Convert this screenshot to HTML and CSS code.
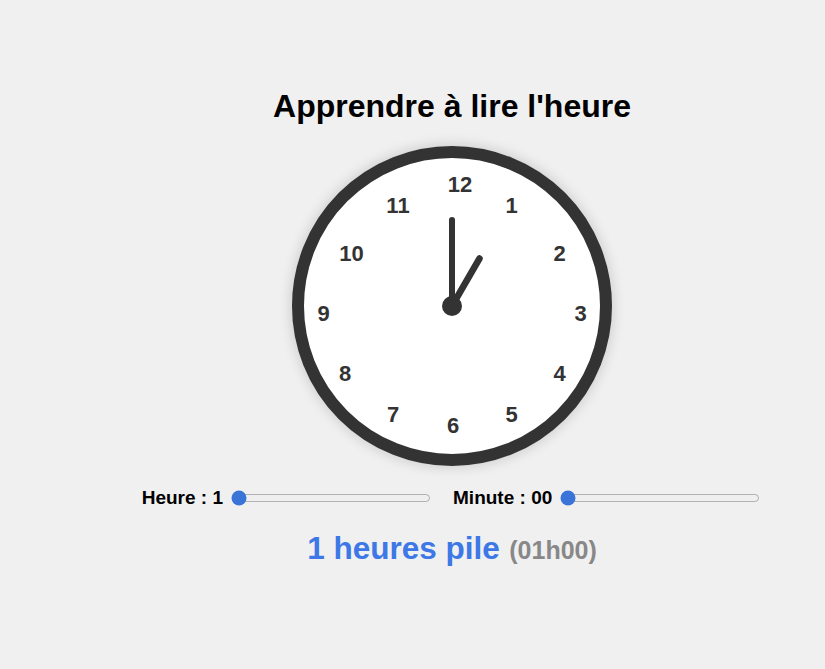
FILE: index.html
```html
<!DOCTYPE html>
<html lang="fr">
<head>
<meta charset="utf-8">
<title>Apprendre à lire l'heure</title>
<link rel="stylesheet" href="styles.css">
</head>
<body>
<div class="app">
  <h1 class="title">Apprendre à lire l'heure</h1>
  <div class="clock">
    <span class="num n12">12</span>
    <span class="num n1">1</span>
    <span class="num n2">2</span>
    <span class="num n3">3</span>
    <span class="num n4">4</span>
    <span class="num n5">5</span>
    <span class="num n6">6</span>
    <span class="num n7">7</span>
    <span class="num n8">8</span>
    <span class="num n9">9</span>
    <span class="num n10">10</span>
    <span class="num n11">11</span>
    <svg class="hands" width="296" height="296" viewBox="0 0 296 296">
      <line x1="148" y1="148" x2="148" y2="62" stroke="#333" stroke-width="6" stroke-linecap="round"/>
      <line x1="148" y1="148" x2="175.5" y2="100.5" stroke="#333" stroke-width="6.5" stroke-linecap="round"/>
      <circle cx="148" cy="148" r="10" fill="#333"/>
    </svg>
  </div>
  <div class="controls">
    <label class="control"><span class="label-text">Heure : 1</span><input class="range" type="range" min="1" max="12" value="1"></label>
    <label class="control"><span class="label-text">Minute : 00</span><input class="range" type="range" min="0" max="59" value="0"></label>
  </div>
  <p class="result"><span class="phrase">1 heures pile</span> <span class="digital">(01h00)</span></p>
</div>
</body>
</html>
```
FILE: styles.css
```css
html, body {
  margin: 0;
  padding: 0;
  background: #f0f0f0;
}
body {
  font-family: "Liberation Sans", Arial, sans-serif;
  color: #000;
}
.app {
  padding-left: 79px;
  padding-top: 88px;
  display: flex;
  flex-direction: column;
  align-items: center;
}
.title {
  margin: 0;
  font-size: 32px;
  font-weight: bold;
  line-height: 37px;
}
.clock {
  margin-top: 21px;
  width: 320px;
  height: 320px;
  box-sizing: border-box;
  border: 12px solid #333;
  border-radius: 50%;
  background: #fff;
  position: relative;
  box-shadow: 0 0 14px rgba(0, 0, 0, 0.18);
}
.hands {
  position: absolute;
  left: 0;
  top: 0;
}
.num {
  position: absolute;
  font-size: 22px;
  font-weight: bold;
  color: #333;
  line-height: 1;
  transform: translate(-50%, -50%);
}
.n12 { left: 156px; top: 27px; }
.n1  { left: 207.5px; top: 48px; }
.n2  { left: 255.5px; top: 96px; }
.n3  { left: 276.5px; top: 156px; }
.n4  { left: 255.5px; top: 216px; }
.n5  { left: 207.5px; top: 257px; }
.n6  { left: 149px; top: 268px; }
.n7  { left: 89px; top: 257px; }
.n8  { left: 41px; top: 216px; }
.n9  { left: 19.5px; top: 156px; }
.n10 { left: 47.5px; top: 96px; }
.n11 { left: 94px; top: 48px; }
.controls {
  margin-top: 21px;
  display: flex;
  align-items: center;
  gap: 20px;
  height: 22px;
}
.control {
  display: flex;
  align-items: center;
  font-size: 19px;
  font-weight: bold;
}
.range {
  width: 200px;
  margin: 0 2px 0 8px;
  accent-color: #3a74d8;
}
.result {
  margin: 21px 0 0 0;
  font-weight: bold;
  line-height: 36px;
}
.phrase {
  font-size: 31.5px;
  color: #3d78e6;
}
.digital {
  margin-left: 5px;
  font-size: 25px;
  color: #888;
}
```
